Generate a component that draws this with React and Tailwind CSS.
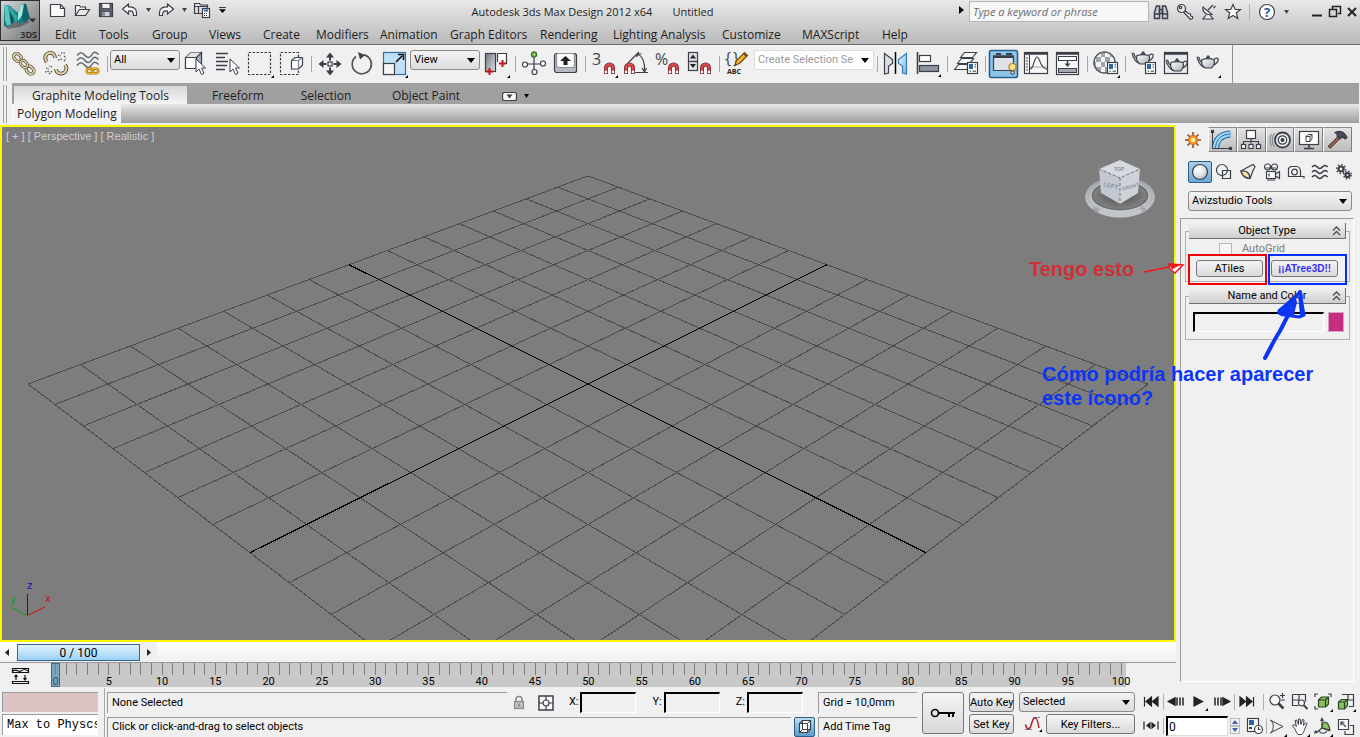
import React from "react";

const INK = "#3a3f4a";
const MENU_FONT = "font-['Open_Sans','Noto_Sans',sans-serif]";

/* ---------- shared drawing helpers ---------- */

function Svg({ w = 32, h = 32, children, className = "" }) {
  return (
    <svg
      width={w}
      height={h}
      viewBox={`0 0 ${w} ${h}`}
      fill="none"
      stroke={INK}
      strokeWidth="1.2"
      aria-hidden="true"
      className={`block shrink-0 ${className}`}
    >
      {children}
    </svg>
  );
}

const Flyout = ({ x = 27, y = 31 }) => (
  <path d={`M${x} ${y}h-3l3-3z`} fill="#000" stroke="none" />
);

const CursorArrow = ({ x, y }) => (
  <path
    transform={`translate(${x} ${y})`}
    d="M0 0v13l3-3 2.5 5.5 2.5-1.2L5.5 9H9.5z"
    fill="#fff"
    strokeWidth="1"
  />
);

const Magnet = ({ x, y }) => (
  <g transform={`translate(${x} ${y})`}>
    <path d="M2 12V6a3.500 3.500 0 0 1 7 0v6" stroke="#6b2a2e" strokeWidth="4" />
    <path d="M2 9V6a3.500 3.500 0 0 1 7 0v3" stroke="#e0474b" strokeWidth="2.400" />
    <path d="M2 11.200V8.800M9 11.200V8.800" stroke="#fff" strokeWidth="2.400" />
  </g>
);

const Panel = ({ x, y }) => (
  <g transform={`translate(${x} ${y})`}>
    <rect x=".5" y=".5" width="10" height="11" fill="#fff" />
    <rect x="2" y="2" width="4" height="5" fill="#2c65a5" stroke="none" />
    <path d="M7.5 2.8h1.5M7.5 5h1.5M2.5 9.2h1.5M5.5 9.2h3.5" strokeWidth="1" />
  </g>
);

const Teapot = ({ x = 0, y = 0 }) => (
  <g transform={`translate(${x} ${y})`}>
    <path
      d="M6 5.500c-1 3 .2 6.500 3 8.500h6.500c2.500-2 3.500-5.500 2.500-8.500-3-1.200-9-1.200-12 0z"
      fill="url(#potFill)"
    />
    <path d="M6 8.500 4.200 7 2.800 3.500.8 3.200" />
    <path d="M8.500 13.500C4.800 12.500 3 9 1.200 4.200" />
    <path d="M18.200 5.500c1-1.500 3.800-2 4-.2.200 2.200-2 4.500-5 6" />
    <path d="M10.500 4.200c0-1 .8-.8 1-2h1.200c.2 1.200 1 1 1 2" fill="#555b66" />
  </g>
);

const SharedFills = () => (
  <defs>
    <linearGradient id="potFill" x1="0" y1="0" x2="1" y2="1">
      <stop offset="0" stopColor="#fff" />
      <stop offset="1" stopColor="#a9adb3" />
    </linearGradient>
    <linearGradient id="slab" x1="0" y1="0" x2="1" y2="1">
      <stop offset="0" stopColor="#70757f" />
      <stop offset="1" stopColor="#e0e2e6" />
    </linearGradient>
    <linearGradient id="blueSlab" x1="0" y1="0" x2="1" y2="1">
      <stop offset="0" stopColor="#e6f4fc" />
      <stop offset="1" stopColor="#79b9e2" />
    </linearGradient>
    <radialGradient id="ball" cx=".38" cy=".32" r=".75">
      <stop offset="0" stopColor="#fff" />
      <stop offset=".6" stopColor="#dfe3e8" />
      <stop offset="1" stopColor="#9ba2ab" />
    </radialGradient>
  </defs>
);

const Chain = ({ cx, cy, s = 1, fill = "#e3d3aa", stroke = "#4d4633", r = 45 }) => (
  <g transform={`translate(${cx} ${cy}) rotate(${r}) scale(${s})`}>
    <rect x="-5.500" y="-3.800" width="11" height="7.600" rx="3.800" stroke={stroke} strokeWidth="4" />
    <rect x="-5.500" y="-3.800" width="11" height="7.600" rx="3.800" stroke={fill} strokeWidth="2" />
  </g>
);

const Waves = ({ ys, x = 5, color = "#4a4f58" }) =>
  ys.map((y) => (
    <path
      key={y}
      d={`M${x} ${y}c2-2 3.500-2 5.200 0s3.500 2 5.200 0 3.500-2 5.200 0`}
      stroke={color}
      strokeWidth="1.500"
    />
  ));

/* ---------- main toolbar icons ---------- */

const icons = {
  link: (
    <Svg>
      <Chain cx={9.5} cy={9.5} s={0.8} />
      <Chain cx={22} cy={22} s={0.8} />
      <Chain cx={16} cy={16} s={0.7} />
    </Svg>
  ),
  unlink: (
    <Svg>
      <path d="M7 14c-3-3-2-8 2-9s6 2 6 5" stroke="#4d4633" strokeWidth="3.800" />
      <path d="M7 14c-3-3-2-8 2-9s6 2 6 5" stroke="#e3d3aa" strokeWidth="2" />
      <path d="M25 17c3 3 1 8-3 8.500s-6-2-6-4.500" stroke="#4d4633" strokeWidth="3.800" />
      <path d="M25 17c3 3 1 8-3 8.500s-6-2-6-4.500" stroke="#e3d3aa" strokeWidth="2" />
      <path d="M18 7l3 1M18 12l4-1M21 5l4 0M24 8l2 2M24 13l2-2M6 20l3 1M5 24l4-1M9 26l3-3M12 19l-3-1" strokeDasharray="1.500 1" />
    </Svg>
  ),
  bind: (
    <Svg>
      <path d="M5 7.500c3.500-4 5.500-3 8 0s5 2.500 7-1 4-2.500 6.500 0M5 12.500c3.500-4 5.500-3 8 0s5 2.500 7-1 4-2.500 6.500 0M5 17.500c3.500-4 5.500-3 8 0s5 2.500 7-1 4-2.500 6.500 0" stroke="#60656e" strokeWidth="1.500" />
      <Chain cx={18} cy={23} s={0.6} fill="#f5c02a" stroke="#96660a" r={0} />
      <Chain cx={23} cy={23} s={0.6} fill="#f5c02a" stroke="#96660a" r={0} />
    </Svg>
  ),
  selectObject: (
    <Svg>
      <path d="M5.500 9.500l5-5h11v11l-5 5h-11z" fill="#e3e5e9" stroke="#7d828c" />
      <path d="M5.500 9.500h11v11h-11z" fill="#fff" />
      <path d="M16.500 9.500l5-5v11l-5 5z" fill="#aab0b9" />
      <CursorArrow x={16} y={11} />
    </Svg>
  ),
  selectByName: (
    <Svg>
      <path d="M4 5.500h12M4 9.500h9M4 13.500h12M4 17.500h11M4 21.500h9" strokeWidth="1.500" />
      <CursorArrow x={18} y={11} />
    </Svg>
  ),
  region: (
    <Svg>
      <rect x="4.500" y="4.500" width="22" height="22" strokeDasharray="2.500 1.500" />
      <Flyout x={30} y={30} />
    </Svg>
  ),
  crossing: (
    <Svg>
      <rect x="4.500" y="4.500" width="18" height="22" strokeDasharray="2.500 1.500" />
      <path d="M15.500 12.500l3.500-3h7.500v7.500l-4 4h-7z" fill="#fff" />
      <path d="M15.500 12.500h7v8M22.500 12.500l4-3" stroke="#7d828c" />
    </Svg>
  ),
  move: (
    <Svg>
      <path d="M16 4.500l4 5h-3v3h-2v-3h-3zM16 27.500l4-5h-3v-3h-2v3h-3zM4.500 16l5-4v3h3v2h-3v3zM27.500 16l-5-4v3h-3v2h3v3z" fill={INK} stroke="none" />
      <rect x="14" y="14" width="4" height="4" />
    </Svg>
  ),
  rotate: (
    <Svg>
      <path d="M10 8.500A9.600 9.600 0 1 0 18 6.800" strokeWidth="1.700" stroke="#50555e" />
      <path d="M12 4l7 3-5 4.500z" fill={INK} stroke="none" />
    </Svg>
  ),
  scale: (
    <Svg>
      <rect x="5.500" y="4.500" width="22" height="22" fill="#bfe0f6" stroke="#2f6fa8" />
      <rect x="5.500" y="15.500" width="11" height="11" fill="#f4f4f4" />
      <path d="M18 14l6-6M20 6.500h5.500V12" stroke="#111" strokeWidth="1.600" />
      <Flyout x={30} y={30} />
    </Svg>
  ),
  pivot: (
    <Svg>
      <rect x="5.500" y="5.500" width="10" height="18" fill="url(#slab)" />
      <path d="M17.500 14V5.500h9V16" fill="#fff" />
      <path d="M9.500 20v7M6 23.500h7M22.500 12v7M19 15.500h7" stroke="#c4161c" strokeWidth="2" />
      <Flyout x={30} y={30} />
    </Svg>
  ),
  manipulate: (
    <Svg>
      <path d="M16 8v16M6 16h20" />
      <circle cx="16" cy="6.500" r="2.600" fill="#7cc356" stroke="#39702a" />
      <circle cx="7" cy="16.500" r="2.500" fill="#fff" />
      <circle cx="25" cy="15.500" r="2.500" fill="#fff" />
      <circle cx="16.500" cy="24" r="2.500" fill="#fff" />
    </Svg>
  ),
  keyboard: (
    <Svg>
      <rect x="4.500" y="5.500" width="22" height="19" rx="2" fill="#b6bac1" />
      <rect x="6.500" y="5.500" width="18" height="14" rx="2" fill="#fbfbfb" stroke="#8d929b" />
      <path d="M15.500 8l5.500 5h-3.500v4h-4v-4H10z" fill="#222" stroke="none" />
    </Svg>
  ),
  angle: (
    <Svg>
      <path d="M8 15L19 4M12 24.500h16M18 6.500c5 2 7 9 6.500 16M16.500 9l1.500-3h3.500M22 20l2.500 4 2-4" />
      <Magnet x={4} y={14} />
    </Svg>
  ),
  spinner: (
    <Svg>
      <rect x="4.500" y="4.500" width="9" height="9" fill="#dfe1e5" />
      <rect x="4.500" y="13.500" width="9" height="9" fill="#dfe1e5" />
      <path d="M9 6.500l3 4H6zM9 20l3-4H6z" fill="#222" stroke="none" />
      <Magnet x={16} y={14} />
    </Svg>
  ),
  mirror: (
    <Svg>
      <path d="M4.500 5.500l8 6v4l-4 2.500v7l-4 1z" fill="#dcdfe3" />
      <path d="M15.500 4v22" stroke="#000" strokeWidth="1.500" />
      <path d="M26.500 5.500l-8 6v4l4 2.500v7l4 1z" fill="url(#blueSlab)" stroke="#2f7fb8" />
    </Svg>
  ),
  align: (
    <Svg>
      <path d="M5.500 4v22" strokeWidth="1.600" />
      <rect x="7.500" y="7.500" width="11" height="6" fill="#fff" />
      <rect x="7.500" y="17.500" width="19" height="6" fill="#8e949e" />
      <Flyout x={29} y={29} />
    </Svg>
  ),
  layers: (
    <Svg>
      <path d="M10.500 9.500l4-5h12l-4 5zM7.500 15.500l4-5h12l-4 5zM4.500 21.500l4-5h12l-4 5z" fill="#f8f8f8" />
      <Panel x={17} y={14} />
    </Svg>
  ),
  graphite: (
    <Svg>
      <rect x="1.500" y="2.500" width="28" height="27" rx="2" fill="#8cc4ea" stroke="#2a5f8c" strokeWidth="1.600" />
      <path d="M5.500 9.500v13h20v-13z" fill="#dfe3e8" />
      <path d="M5 8.500h21" strokeWidth="2.500" />
      <path d="M8 6h5M18 6h6" strokeWidth="2" />
      <circle cx="24.500" cy="19" r="3.500" fill="#ffe08a" stroke="#b98519" />
      <path d="M23 23h3v3h-3z" fill="#eee" strokeWidth="1" />
    </Svg>
  ),
  curve: (
    <Svg>
      <rect x="4.500" y="4.500" width="23" height="21" fill="#f8f8f8" />
      <path d="M4 5.500h24" strokeWidth="2.500" />
      <path d="M9.500 7v18M6 10h2M6 13h2M6 16h2M6 19h2M6 22h2" strokeWidth="1" />
      <path d="M10 19h17" stroke="#9aa0aa" strokeWidth="1" />
      <path d="M10 21c4 0 4-12 7-12s3 12 10 12" />
    </Svg>
  ),
  schematic: (
    <Svg>
      <rect x="4.500" y="4.500" width="22" height="22" fill="#f8f8f8" />
      <path d="M4 5.500h23" strokeWidth="2.500" />
      <rect x="6.500" y="8.500" width="18" height="4" fill="#fff" strokeWidth="1" />
      <rect x="6.500" y="20.500" width="18" height="4" fill="#a4a9b1" strokeWidth="1" />
      <path d="M15.500 13v4" strokeWidth="1.500" />
      <path d="M12.500 15.500h6l-3 3.500z" fill={INK} stroke="none" />
    </Svg>
  ),
  material: (
    <Svg>
      <circle cx="14.500" cy="14.500" r="10.500" fill="#f4f4f4" />
      <path d="M11 4.500h4V9h-4zM15 9h5v5h-5zM6 9h5v5H6zM20 5.500l3 3.500h-3zM11 14h4v5h-4zM20 14h4.500v5H20zM4.500 14H6v5H4.500zM6 19h5v4H6zM15 19h5v5h-5z" fill="#a1a6ae" stroke="none" />
      <circle cx="14.500" cy="14.500" r="10.500" stroke="#5b606a" />
      <Panel x={17} y={14} />
      <Flyout x={30} y={30} />
    </Svg>
  ),
  renderSetup: (
    <Svg>
      <Teapot x={3} y={2} />
      <Panel x={17} y={14} />
    </Svg>
  ),
  renderFrame: (
    <Svg>
      <rect x="4.500" y="4.500" width="23" height="21" fill="#e9ebee" />
      <path d="M4 5.500h24" strokeWidth="2.500" />
      <Teapot x={5} y={9} />
    </Svg>
  ),
  teapot: (
    <Svg>
      <Teapot x={4} y={6} />
      <Flyout x={29} y={30} />
    </Svg>
  ),
};

const SnapThree = () => (
  <Svg>
    <text x="4" y="17" fontSize="16" fontFamily="Open Sans, sans-serif" fill="#3f444e" stroke="none">3</text>
    <Magnet x={16} y={14} />
    <Flyout x={30} y={30} />
  </Svg>
);
const SnapPercent = () => (
  <Svg>
    <text x="3" y="17" fontSize="16" fontFamily="Open Sans, sans-serif" fill="#3f444e" stroke="none">%</text>
    <Magnet x={16} y={14} />
  </Svg>
);
const NamedSets = () => (
  <Svg>
    <text x="3" y="16" fontSize="16" fontFamily="Open Sans, sans-serif" fill="#3f444e" stroke="none">{"{"}</text>
    <text x="11" y="16" fontSize="16" fontFamily="Open Sans, sans-serif" fill="#3f444e" stroke="none">{"}"}</text>
    <path d="M13 17l1.500-4.500 8-8 3 3-8 8z" fill="#f3b62c" stroke="#6b4a10" />
    <path d="M21.500 5.500l3 3" stroke="#8c3a24" strokeWidth="1.500" />
    <text x="5" y="26" fontSize="7" fontWeight="bold" fontFamily="Open Sans, sans-serif" fill="#222" stroke="none">ABC</text>
  </Svg>
);

function Tool({ label, children, pressed }) {
  return (
    <button type="button" aria-label={label} aria-pressed={pressed} className="size-8 shrink-0">
      {children}
    </button>
  );
}

const Sep = () => (
  <span className="flex w-1.5 shrink-0 justify-center">
    <span className="h-4 w-px bg-[#a8a8a8]" />
  </span>
);

const Grip = () => (
  <span className="ml-[3px] mr-px flex w-1 shrink-0 justify-between self-stretch py-0.5">
    <span className="w-px bg-[#a0a0a0]" />
    <span className="w-px bg-[#a0a0a0]" />
  </span>
);

const DownArrow = ({ className = "" }) => (
  <svg width="8" height="5" viewBox="0 0 8 5" aria-hidden="true" className={`pointer-events-none shrink-0 ${className}`}>
    <path d="M0 0h8L4 5z" fill="#000" />
  </svg>
);

function Combo({ label, value, className = "", skin = "border-[#8a8a8a] bg-linear-to-b from-[#f4f4f4] to-[#dcdcdc] rounded-[3px]", text = "text-black" }) {
  return (
    <span className={`relative flex h-5 shrink-0 items-center border ${skin} ${className}`}>
      <select aria-label={label} className={`h-full w-full appearance-none bg-transparent pl-[3px] pr-4 outline-none ${text}`} defaultValue={value}>
        <option>{value}</option>
      </select>
      <DownArrow className="absolute right-1" />
    </span>
  );
}

function MainToolbar() {
  return (
    <div className="flex h-[38px] shrink-0 bg-[#f0f0f0]">
      <div className="flex items-center border-r border-[#8f8f8f] pr-2 text-[11px]">
        <Grip />
        <Tool label="Select and Link">{icons.link}</Tool>
        <Tool label="Unlink Selection">{icons.unlink}</Tool>
        <Tool label="Bind to Space Warp">{icons.bind}</Tool>
        <Sep />
        <Combo label="Selection Filter" value="All" className="mb-2 w-[70px]" />
        <Tool label="Select Object">{icons.selectObject}</Tool>
        <Tool label="Select by Name">{icons.selectByName}</Tool>
        <Tool label="Rectangular Selection Region">{icons.region}</Tool>
        <Tool label="Window Crossing">{icons.crossing}</Tool>
        <Sep />
        <Tool label="Select and Move">{icons.move}</Tool>
        <Tool label="Select and Rotate">{icons.rotate}</Tool>
        <Tool label="Select and Scale" pressed>{icons.scale}</Tool>
        <Combo label="Reference Coordinate System" value="View" className="mb-2 w-[70px]" />
        <Tool label="Use Pivot Point Center">{icons.pivot}</Tool>
        <Sep />
        <Tool label="Select and Manipulate">{icons.manipulate}</Tool>
        <Tool label="Keyboard Shortcut Override">{icons.keyboard}</Tool>
        <Sep />
        <Tool label="Snaps Toggle"><SnapThree /></Tool>
        <Tool label="Angle Snap">{icons.angle}</Tool>
        <Tool label="Percent Snap"><SnapPercent /></Tool>
        <Tool label="Spinner Snap">{icons.spinner}</Tool>
        <Sep />
        <Tool label="Edit Named Selection Sets"><NamedSets /></Tool>
        <Combo
          label="Named Selection Sets"
          value="Create Selection Se"
          className="mb-2 w-[120px]"
          skin="border-[#dcdcdc] bg-white"
          text="text-[#9a9a9a]"
        />
        <Sep />
        <Tool label="Mirror">{icons.mirror}</Tool>
        <Tool label="Align">{icons.align}</Tool>
        <Sep />
        <Tool label="Layer Manager">{icons.layers}</Tool>
        <Sep />
        <Tool label="Graphite Modeling Tools" pressed>{icons.graphite}</Tool>
        <Tool label="Curve Editor">{icons.curve}</Tool>
        <Tool label="Schematic View">{icons.schematic}</Tool>
        <Sep />
        <Tool label="Material Editor">{icons.material}</Tool>
        <Sep />
        <Tool label="Render Setup">{icons.renderSetup}</Tool>
        <Tool label="Rendered Frame Window">{icons.renderFrame}</Tool>
        <Tool label="Render Production">{icons.teapot}</Tool>
      </div>
    </div>
  );
}

/* ---------- title bar ---------- */

const Tiny = ({ color = "#444", s = 6 }) => (
  <svg width={s} height="4" viewBox="0 0 6 4" preserveAspectRatio="none" aria-hidden="true">
    <path d="M0 0h6L3 4z" fill={color} />
  </svg>
);

function IconButton({ label, className = "w-6", children }) {
  return (
    <button type="button" aria-label={label} className={`flex shrink-0 items-center justify-center ${className}`}>
      {children}
    </button>
  );
}

function AppLogo() {
  return (
    <button type="button" aria-label="Application menu" className="relative h-[41px] w-10 shrink-0 border border-[#2e2e30] bg-linear-to-br from-[#d4d6d7] to-[#6f7174]">
      <Svg w={38} h={39}>
        <g stroke="none">
          <path d="M4 25l9-4 14-2 2 2-10 5-12 2z" fill="#3c4246" opacity=".55" />
          <path d="M3 4l6 1 8 7 3-8 5-1 3 15-7 4-8-1-7 5-3-1z" fill="#147c80" />
          <path d="M3 4l4 1 3 18-4 2-2-6z" fill="#5fc4c0" />
          <path d="M6 4l4 1 7 12-2 5-4-5z" fill="#2fa5a4" />
          <path d="M17 12l3-8h4l-2 9-5 7z" fill="#a5e6e0" />
          <path d="M23 3l2-.5 4 15-6 4-2-7z" fill="#0e6468" />
          <path d="M9 11l4 7-1 4-2 1z" fill="#0c5155" />
          <path d="M28 17.500h7l-3.500 4z" fill="#2b2f33" />
        </g>
      </Svg>
      <span className="absolute bottom-0 right-0.5 font-['Open_Sans',sans-serif] text-[9px] font-semibold leading-[11px] text-[#222]">3DS</span>
    </button>
  );
}

const MENUS = ["Edit", "Tools", "Group", "Views", "Create", "Modifiers", "Animation", "Graph Editors", "Rendering", "Lighting Analysis", "Customize", "MAXScript", "Help"];

function Header() {
  return (
    <header className={`flex h-[45px] shrink-0 border-b border-[#6e6e6e] bg-linear-to-b from-[#e9e9e9] to-[#b9b9b9] text-[12px] text-[#1e1e1e] ${MENU_FONT}`}>
      <AppLogo />
      <div className="flex min-w-0 flex-1 flex-col">
        <div className="flex h-6 items-stretch">
          <div className="ml-1.5 flex shrink-0 pb-1">
            <IconButton label="New">
              <Svg w={18} h={16}><path d="M1.500 2.500h10l4 4v8h-14z" fill="#fbfbfb" /><path d="M11.500 2.500v4h4" /></Svg>
            </IconButton>
            <IconButton label="Open">
              <Svg w={18} h={16}><path d="M2.500 13.500v-10h4l1 1.500h5v3" fill="#f5f5f5" /><path d="M2.500 13.500l4-6h10l-4 6z" fill="#e9e9e9" /></Svg>
            </IconButton>
            <IconButton label="Save">
              <Svg w={16} h={16}><rect x="1.500" y="1.500" width="13" height="13" fill="#5d6470" /><rect x="4" y="1.500" width="8" height="5" fill="#f3f3f3" strokeWidth=".8" /><rect x="4" y="9.500" width="8" height="5" fill="#cdd0d5" strokeWidth=".8" /><path d="M6 10.500v3" /></Svg>
            </IconButton>
            <IconButton label="Undo">
              <Svg w={18} h={16}><path d="M1.500 7l6-5v3c6-.5 8.500 2 8 8.500h-3c.2-3.500-1-5-5-4.500v3z" fill="#f7f7f7" /></Svg>
            </IconButton>
            <IconButton label="Undo history" className="w-3"><Tiny s={5} /></IconButton>
            <IconButton label="Redo">
              <Svg w={18} h={16}><path d="M16.500 7l-6-5v3c-6-.5-8.500 2-8 8.500h3c-.2-3.500 1-5 5-4.500v3z" fill="#f7f7f7" /></Svg>
            </IconButton>
            <IconButton label="Redo history" className="w-3"><Tiny s={5} /></IconButton>
            <IconButton label="Project Folder">
              <Svg w={18} h={18}><path d="M9 12.500H1.500v-10h5l1 1.500h7v3M1.500 5.500h13M5.500 5.500v7" fill="none" /><rect x="9.500" y="7.500" width="7" height="9" fill="#fff" /><path d="M11 9.500h4" stroke="#2c65a5" strokeWidth="2" /><path d="M11 12.500h4M11 14.500h4" strokeWidth="1" strokeDasharray="1 1" /></Svg>
            </IconButton>
            <IconButton label="Customize Quick Access" className="w-4">
              <svg width="7" height="6" viewBox="0 0 8 7"><path d="M0 0h8v1H0zM0 2.500h8L4 7z" fill="#000" /></svg>
            </IconButton>
          </div>
          <h1 className="flex min-w-0 flex-1 items-center justify-center gap-5 whitespace-nowrap text-[11px]">
            <span>Autodesk 3ds Max Design 2012 x64</span>
            <span>Untitled</span>
          </h1>
          <div className="flex shrink-0">
            <IconButton label="Collapse search" className="mb-1 w-3">
              <svg width="5" height="8" viewBox="0 0 5 8"><path d="M0 0l5 4-5 4z" fill="#000" /></svg>
            </IconButton>
            <input
              aria-label="Search"
              placeholder="Type a keyword or phrase"
              className="mb-0.5 ml-0.5 mt-px w-[180px] border border-[#b4b4b4] bg-[#f7f7f8] px-[3px] pt-0.5 text-[11px] italic placeholder:text-[#6d6d6d]"
            />
            <IconButton label="Search" className="w-6">
              <Svg w={18} h={18}><path d="M2.500 15.500V9l2-6h3v12.500zM15.500 15.500V9l-2-6h-3v12.500z" fill="#c9ccd1" strokeWidth="1.500" /><path d="M7.500 6.500h3v4h-3zM2.500 11h5M10.500 11h5" strokeWidth="1.500" /></Svg>
            </IconButton>
            <IconButton label="Subscription" className="w-6">
              <Svg w={18} h={18}><circle cx="5.500" cy="5.500" r="4" fill="#e9ebee" /><circle cx="4.500" cy="4.500" r="1.200" /><path d="M8 9.500l6.500 7 2-1v-2l-2-.5v-2l-2-.3L9.500 8z" fill="#fff" /></Svg>
            </IconButton>
            <IconButton label="Communication Center" className="w-6">
              <Svg w={18} h={18}><path d="M3 4c-1 5 4 9 9 7.500z" fill="#e9ebee" /><path d="M8 7l5-5M13.500 5l2-2" /><path d="M6 12l-3 4h10l-3-4" fill="#e9ebee" /></Svg>
            </IconButton>
            <IconButton label="Favorites" className="w-6">
              <Svg w={18} h={18}><path d="M9 1.500l2.200 5h5.300l-4.200 3.500 1.500 5.500L9 12.500l-4.800 3 1.500-5.500L1.500 6.500h5.300z" fill="#fff" /></Svg>
            </IconButton>
            <span className="mx-1 my-1 w-px bg-[#b0b0b0]" />
            <IconButton label="Help" className="w-[26px]">
              <Svg w={18} h={18}>
                <circle cx="9" cy="9" r="7.500" fill="#fff" />
                <text x="9" y="13.500" textAnchor="middle" fontSize="13" fontWeight="bold" fontFamily="Open Sans, sans-serif" fill="#1f55a8" stroke="none">?</text>
              </Svg>
            </IconButton>
            <IconButton label="Help menu" className="mr-4 w-3"><Tiny s={5} /></IconButton>
            <IconButton label="Minimize" className="w-[18px]"><Svg w={12} h={12}><path d="M1 9.500h10" stroke="#222" strokeWidth="2" /></Svg></IconButton>
            <IconButton label="Restore" className="w-[18px]"><Svg w={14} h={14}><path d="M4.500 4V1.500h8v7H10" stroke="#222" strokeWidth="1.500" /><rect x="1.500" y="4.500" width="7" height="7" stroke="#222" strokeWidth="1.500" /></Svg></IconButton>
            <IconButton label="Close" className="w-4"><Svg w={10} h={10}><path d="M1 1l8 8M9 1L1 9" stroke="#222" strokeWidth="2" /></Svg></IconButton>
          </div>
        </div>
        <nav className="grid h-5 grid-cols-[44px_53px_57px_54px_53px_64px_70px_90px_73px_109px_80px_80px_40px] items-end pl-[15px]">
          {MENUS.map((m) => (
            <button key={m} type="button" className="whitespace-nowrap text-left">{m}</button>
          ))}
        </nav>
      </div>
    </header>
  );
}

/* ---------- ribbon ---------- */

function Ribbon() {
  return (
    <div className={`flex h-[42px] shrink-0 bg-[#f0f0f0] text-[12px] text-[#1e1e1e] ${MENU_FONT}`}>
      <Grip />
      <div className="ml-1 mr-px flex flex-1 flex-col">
        <div className="grid h-[21px] grid-cols-[176px_92px_92px_108px_auto] items-stretch justify-start bg-[#a0a0a0] pl-0.5">
          <button type="button" className="mr-[3px] mt-[3px] bg-linear-to-b from-[#d8d8d8] to-[#f6f6f6] leading-[18px]">Graphite Modeling Tools</button>
          <button type="button" className="pl-1 pt-1">Freeform</button>
          <button type="button" className="pr-1 pt-1">Selection</button>
          <button type="button" className="pr-1 pt-1">Object Paint</button>
          <button type="button" aria-label="Ribbon display" className="ml-5 flex items-center gap-1.5 pt-1">
            <Svg w={16} h={9}><rect x=".5" y=".5" width="14" height="8" rx="2" fill="#f4f4f4" /><path d="M4.500 2.500h6l-3 4z" fill={INK} stroke="none" /></Svg>
            <Tiny color="#000" s={5} />
          </button>
        </div>
        <div className="flex h-[19px] bg-linear-to-b from-[#e8e8e8] to-[#9d9d9d]">
          <button type="button" className="border-l border-white bg-[#f3f3f3] px-1 text-[12px] leading-[18px]">Polygon Modeling</button>
        </div>
      </div>
    </div>
  );
}

/* ---------- viewport ---------- */

const CELLS = 14;

function project(u, v) {
  const a = u - v;
  const b = u + v;
  const w = 1 - 0.1716 * b;
  return [588 + (280 * a) / w, -430.4 + 814.4 / w];
}

function gridLines() {
  const lines = [];
  for (let i = 0; i <= CELLS; i++) {
    const t = (2 * i) / CELLS - 1;
    const axis = i * 2 === CELLS;
    lines.push({ from: project(t, -1), to: project(t, 1), axis });
    lines.push({ from: project(-1, t), to: project(1, t), axis });
  }
  return lines.sort((p, q) => Number(p.axis) - Number(q.axis));
}

function ViewCube() {
  return (
    <svg width="72" height="60" viewBox="0 0 72 60" aria-hidden="true" className="absolute right-[18px] top-8">
      <defs>
        <linearGradient id="ring" x1="0" y1="0" x2="0" y2="1">
          <stop offset="0" stopColor="#9fa2a6" />
          <stop offset="1" stopColor="#c6c9ce" />
        </linearGradient>
        <radialGradient id="shade">
          <stop offset="0" stopColor="#4c4e51" />
          <stop offset="1" stopColor="#808080" />
        </radialGradient>
      </defs>
      <ellipse cx="36" cy="38" rx="35" ry="20.500" fill="url(#ring)" />
      <ellipse cx="36" cy="36.500" rx="29" ry="15.500" fill="#6e6e6e" stroke="#d2d5d9" strokeWidth="1" />
      <ellipse cx="36" cy="36.500" rx="26.500" ry="13.500" fill="url(#shade)" />
      <path d="M15 10L36 1l20 9-20 9z" fill="#d6dadf" />
      <path d="M15 10l21 9v26L17 34z" fill="#c3c8d0" />
      <path d="M56 10l-20 9v26l18-11z" fill="#cdd1d8" />
      <path d="M15 10l21 9 20-9M36 19v26" stroke="#6e737c" strokeDasharray="3 2" fill="none" />
      <g fontFamily="Liberation Sans, sans-serif" fontWeight="bold" fontSize="7" fill="#8d929b">
        <text x="19" y="27" transform="rotate(14 19 27)" fontSize="6">LEFT</text>
        <text x="39" y="32" transform="rotate(-18 39 32)" fontSize="5">FRONT</text>
        <text x="30" y="12" fontSize="5">TOP</text>
        <text x="8" y="52" transform="rotate(20 8 52)">W</text>
        <text x="58" y="53" transform="rotate(-30 58 53)">S</text>
      </g>
    </svg>
  );
}

function AxisTripod() {
  return (
    <svg width="48" height="40" viewBox="0 0 48 40" aria-hidden="true" className="absolute bottom-5 left-1.5" fontFamily="DejaVu Sans, sans-serif" fontSize="10">
      <path d="M19.500 35V14" stroke="#1010c0" />
      <path d="M19.500 35.500L2.500 27" stroke="#10a010" />
      <path d="M19.500 35.500L37 27" stroke="#d01010" />
      <text x="19" y="9" fill="#1010c0">z</text>
      <text x="2" y="23" fill="#10a010">y</text>
      <text x="37" y="22" fill="#d01010">x</text>
    </svg>
  );
}

function Viewport() {
  return (
    <section className="relative flex min-h-0 flex-1 overflow-hidden border-2 border-[#fcf800] bg-[#7d7d7d]">
      <svg viewBox="2 127 1172 513" preserveAspectRatio="xMidYMid slice" className="h-full min-w-0 flex-1" shapeRendering="crispEdges" aria-label="Perspective grid">
        {gridLines().map((l, i) => (
          <line key={i} x1={l.from[0]} y1={l.from[1]} x2={l.to[0]} y2={l.to[1]} stroke={l.axis ? "#000" : "#4b4b4b"} strokeWidth="1" />
        ))}
      </svg>
      <p className="absolute left-1 top-[3px] font-['Liberation_Sans',sans-serif] text-[11px] leading-[13px] text-[#cfcfcf]">[ + ] [ Perspective ] [ Realistic ]</p>
      <ViewCube />
      <AxisTripod />
    </section>
  );
}

/* ---------- time slider and track bar ---------- */

function TimeSlider() {
  return (
    <div className="flex h-5 shrink-0 items-center bg-linear-to-b from-white to-[#efeff3] text-[12px]">
      <button type="button" aria-label="Previous frame" className="flex h-full w-[17px] items-center pl-[5px]">
        <svg width="4" height="7" viewBox="0 0 4 7"><path d="M4 0v7L0 3.500z" fill="#222" /></svg>
      </button>
      <button type="button" className="h-[17px] w-[123px] border border-[#35678c] bg-linear-to-b from-[#dff2fc] via-[#bfe3f9] to-[#98d1f2] leading-[16px]">0 / 100</button>
      <button type="button" aria-label="Next frame" className="flex h-full w-[17px] items-center bg-[#f0f0f0] pl-[7px]">
        <svg width="4" height="7" viewBox="0 0 4 7"><path d="M0 0v7l4-3.500z" fill="#222" /></svg>
      </button>
    </div>
  );
}

function TrackBar() {
  return (
    <div className="flex h-[26px] shrink-0 border-t border-[#9a9a9a] bg-[#f0f0f0]">
      <button type="button" aria-label="Open Mini Curve Editor" className="flex w-[51px] shrink-0 justify-center pr-[9px] pt-1">
        <Svg w={20} h={18}><g stroke="#111" strokeWidth="1.200"><path d="M1.500 1.500h16v4h-16zM1.500 14.500h16v2h-16z" /><path d="M2 4c4-3 5 2 8 0s4-2 7 0M5 13V8M3.500 10L5 8l1.500 2M14 8v5M12.500 11l1.500 2 1.500-2" /></g></Svg>
      </button>
      <div className="relative mb-px mr-[50px] flex flex-1 justify-between bg-[#c8c8c8] pl-1 pr-1">
        {Array.from({ length: 101 }, (_, f) => (
          <span key={f} className="flex w-px flex-col items-center">
            <span className="h-3 w-px shrink-0 bg-[#7e7e7e]" />
            {f % 5 === 0 && <span className="text-[11px] leading-[13px]">{f}</span>}
          </span>
        ))}
        <span className="absolute inset-y-0 left-0 w-[9px] border border-[#3f6a85] bg-[#4a8db8]/60" />
      </div>
    </div>
  );
}

/* ---------- command panel ---------- */

const panelTabs = [
  ["Modify", <Svg w={24} h={22}><path d="M5.500 19.500C6 10 11 5.500 20.500 5" stroke="#1f6ea6" strokeWidth="7" /><path d="M5.500 19.500C6 10 11 5.500 20.500 5" stroke="#a5d6f2" strokeWidth="5" /><path d="M5.500 19.500C6 10 11 5.500 20.500 5" stroke="#1f6ea6" strokeWidth="1" /><path d="M2.500 3v16.500h18" strokeWidth="1" /><rect x="1.500" y="1.500" width="2" height="2" fill={INK} /><rect x="19.500" y="18.500" width="2" height="2" fill={INK} /></Svg>],
  ["Hierarchy", <Svg w={24} h={22}><rect x="7.500" y="1.500" width="9" height="8" fill="#fff" /><path d="M12 9.500v5M4.500 15v-2.500h15V15" /><rect x="2.500" y="15.500" width="4" height="4" fill="#fff" /><rect x="10" y="15.500" width="4" height="4" fill="#fff" /><rect x="17.500" y="15.500" width="4" height="4" fill="#fff" /></Svg>],
  ["Motion", <Svg w={24} h={22}><circle cx="14.500" cy="11" r="7.500" fill="#e8eaed" strokeWidth="1.800" /><circle cx="14.500" cy="11" r="4.200" fill="#fff" /><circle cx="14.500" cy="11" r="1.500" fill={INK} /><path d="M6.500 4c-3 4-3 10 0 14M3.500 5c-2 4-2 8 0 12" stroke="#8a8f98" /></Svg>],
  ["Display", <Svg w={24} h={22}><rect x="2.500" y="2.500" width="19" height="13" fill="#fff" /><path d="M7 19.500h10M12 16v3" strokeWidth="1.600" /><path d="M9 7.500l2-2h4v4l-2 3H9zM9 7.500h4v5M13 7.500l2-2" strokeWidth="1" /></Svg>],
  ["Utilities", <Svg w={24} h={22}><path d="M3 18.500L13.500 8" stroke="#3f2422" strokeWidth="3.600" /><path d="M3.500 18L13.500 8" stroke="#a8665c" strokeWidth="1.800" /><path d="M9 3.500c5-2.500 9-1 12 5l-2 1.500-2.500-2-2.500 2-3-3c1-1 0-2-2-3.500z" fill="#454b57" /></Svg>],
];

const categories = [
  ["Geometry", <Svg w={20} h={20}><circle cx="10" cy="10" r="7.500" fill="url(#ball)" /></Svg>],
  ["Shapes", <Svg w={18} h={18}><circle cx="7" cy="7" r="5.500" fill="#f4f4f4" /><path d="M7.500 7.500h8v8h-8z" /></Svg>],
  ["Lights", <Svg w={18} h={18}><path d="M2 8c1 4 4 7 9 7.500l3-8 2-4-2-2-4 2z" fill="#eee" /><path d="M2 8c1 4 4 7 9 7.500C11 10 7 7 2 8z" fill="#f5e2a0" /></Svg>],
  ["Cameras", <Svg w={20} h={20}><circle cx="5.500" cy="5" r="3" fill="#fff" /><circle cx="12.500" cy="5" r="3" fill="#fff" /><rect x="4.500" y="9.500" width="9" height="7" fill="#fff" /><path d="M13.500 12l4-2.500v7l-4-2.500M7 11.500v3M4 6h10M5 18h8" /></Svg>],
  ["Helpers", <Svg w={18} h={18}><path d="M1.500 13.500v-8l2-2h6c3 0 4 3 4 6v4z" fill="#f4f4f4" /><path d="M13 13.500h4v2" /><circle cx="7.500" cy="9" r="2.800" /></Svg>],
  ["Space Warps", <Svg w={18} h={18}><Waves x={1} ys={[4, 9, 14]} color="#2f343d" /></Svg>],
  ["Systems", <Svg w={18} h={18}><circle cx="6" cy="6" r="2.500" strokeWidth="2.200" stroke="#3b3f47" /><circle cx="6" cy="6" r="4.400" strokeWidth="1.600" strokeDasharray="1.400 2" /><circle cx="12.500" cy="12" r="2" strokeWidth="2.200" stroke="#3b3f47" /><circle cx="12.500" cy="12" r="3.800" strokeWidth="1.600" strokeDasharray="1.400 1.600" /></Svg>],
];

function Rollout({ title, children }) {
  return (
    <section className="flex flex-col">
      <button
        type="button"
        className="relative z-10 mx-1 flex h-4 items-center justify-center border-b border-r border-b-[#6f6f6f] border-r-[#6f6f6f] bg-linear-to-b from-[#f0f0f0] to-[#cfcfcf] leading-[14px]"
      >
        {title}
        <svg width="9" height="10" viewBox="0 0 9 10" className="absolute right-1" fill="none" stroke="#555" strokeWidth="1.500" aria-hidden="true">
          <path d="M1 4.500L4.500 1 8 4.500M1 9l3.500-3.500L8 9" />
        </svg>
      </button>
      <div className="-mt-2 border border-[#b0b0b0] pt-2">{children}</div>
    </section>
  );
}

const pushButton = "rounded-[3px] border border-[#777] bg-linear-to-b from-[#f5f5f5] to-[#d9d9d9]";

function CommandPanel() {
  return (
    <aside className="relative flex w-[184px] shrink-0 flex-col bg-[#f0f0f0] text-[11px]">
      <div className="mt-0.5 flex h-[25px] items-stretch pl-px pr-2">
        <button type="button" aria-label="Create" aria-pressed="true" className="flex w-[31px] items-center justify-center">
          <Svg w={20} h={20}>
            <path d="M10 2v16M2 10h16M4.500 4.500l11 11M15.500 4.500l-11 11" stroke="#8f4a20" strokeWidth="1.600" />
            <circle cx="10" cy="10" r="4.500" fill="#f79a2e" stroke="#d2691e" />
            <circle cx="10" cy="10" r="2.200" fill="#ffe9a0" stroke="none" />
          </Svg>
        </button>
        {panelTabs.map(([label, icon]) => (
          <button key={label} type="button" aria-label={label} className="flex flex-1 items-center justify-center border border-b-[#8b8b8b] border-l-white border-r-[#7c7c7c] border-t-[#8b8b8b] bg-linear-to-b from-[#e4e4e4] to-[#bcbcbc]">
            {icon}
          </button>
        ))}
      </div>
      <div className="mt-2 flex h-6 items-center pl-3 pr-1">
        {categories.map(([label, icon], i) => (
          <button
            key={label}
            type="button"
            aria-label={label}
            className={
              i === 0
                ? "flex h-[22px] w-6 items-center justify-center rounded-[2px] border border-[#2a5f8c] bg-linear-to-b from-[#a9cfe9] to-[#6fa9d4]"
                : "flex h-[22px] w-6 items-center justify-center"
            }
          >
            {icon}
          </button>
        ))}
      </div>
      <Combo label="Object category" value="Avizstudio Tools" className="ml-3 mr-2 mt-[7px]" />
      <div className="mb-1.5 ml-1 mr-1.5 mt-[7px] flex flex-1 flex-col gap-1.5 border border-b-white border-l-[#9a9a9a] border-r-white border-t-[#9a9a9a] pl-1 pr-[3px] pt-1">
        <Rollout title="Object Type">
          <label className="ml-[33px] flex h-[18px] items-center gap-2.5 text-[#7b7b7b]">
            <input type="checkbox" disabled className="size-[13px] appearance-none border border-[#b9b9b9] bg-[#f6f6f6]" />
            AutoGrid
          </label>
          <div className="-mb-1 -mt-1 grid h-[31px] grid-cols-2 gap-px px-0.5">
            <div className="relative border-2 border-[#f00000] pl-1.5 pr-0.5 pt-1">
              <button type="button" className={`block h-[17px] w-full leading-[14px] ${pushButton}`}>ATiles</button>
            </div>
            <div className="relative border-2 border-[#0030ff] pl-px pr-[7px] pt-1">
              <button type="button" className={`block h-[17px] w-full font-['Liberation_Sans',sans-serif] text-[10px] font-bold leading-[14px] text-[#3a32f0] ${pushButton}`}>¡¡ATree3D!!</button>
            </div>
          </div>
        </Rollout>
        <Rollout title="Name and Color">
          <div className="flex items-center gap-1 py-[7px] pl-[7px] pr-[5px]">
            <input aria-label="Object name" className="h-5 min-w-0 flex-1 border border-b-white border-l-2 border-r-white border-l-black border-t-2 border-t-black bg-[#f0f0f0] px-1" />
            <button type="button" aria-label="Object color" className="h-5 w-4 border border-[#d8a0c0] bg-[#c52d80]" />
          </div>
        </Rollout>
      </div>
      <Annotations />
    </aside>
  );
}

function Annotations() {
  return (
    <div className="pointer-events-none font-['Liberation_Sans',sans-serif] text-[20px] font-bold leading-6">
      <p className="absolute left-[-147px] top-[132px] z-20 whitespace-nowrap text-[#cf2f35]">Tengo esto</p>
      <p className="absolute left-[-134px] top-[237px] z-20 whitespace-nowrap text-[#0c35f5]">
        Cómo podría hacer aparecer
        <br />
        este ícono?
      </p>
      <svg width="46" height="20" viewBox="0 0 46 20" fill="none" className="absolute left-[-34px] top-[134px] z-20" aria-hidden="true">
        <path d="M2 13l30-6" stroke="#f01818" strokeWidth="1.500" />
        <path d="M27 5l14 1-8 8-5-4z" fill="#fff" stroke="#f01818" strokeWidth="1.500" />
        <path d="M27 4.500l12 1-9 5z" fill="#f01818" />
      </svg>
      <svg width="50" height="74" viewBox="0 0 50 74" fill="none" className="absolute left-[82px] top-[163px] z-20" aria-hidden="true" stroke="#0c35f5" strokeLinecap="round" strokeLinejoin="round">
        <path d="M7 70c5-9 9-18 15-27 4-8 7-14 11-21" strokeWidth="4" />
        <path d="M42 4L21 23c-1 2 2 4 6 4l14 2 5-2z" strokeWidth="3" />
        <path d="M42 4c1 8 1 16 2 22M37 14l-3 12" strokeWidth="4" />
        <path d="M39 8L20 22l8 5 6-9z" fill="#0c35f5" />
      </svg>
    </div>
  );
}

/* ---------- status bar ---------- */

const sunken = "border-l border-t border-l-[#9a9a9a] border-t-[#9a9a9a]";

function Coord({ axis }) {
  return (
    <label className="flex items-center gap-0.5">
      {axis}:
      <input className="h-[21px] w-14 border border-b-white border-l-2 border-r-white border-l-black border-t-2 border-t-black bg-[#f0f0f0] px-1" />
    </label>
  );
}

const VSep = () => <span className="h-4 w-px shrink-0 bg-[#b0b0b0]" />;

const nav = [
  ["Zoom", <><circle cx="8" cy="8" r="5" fill="#f6f6f6" /><path d="M11.500 11.500l5 5" strokeWidth="2.600" /><path d="M15.500 1v5M13 3.500h5M14 8h4" /></>],
  ["Zoom All", <><path d="M2.500 2.500h13v7M2.500 2.500v11h6M9 2.500v7M2.500 8h7" /><circle cx="11.500" cy="11" r="3" fill="#fff" /><path d="M14 13.500l3.500 3.500" strokeWidth="2" /></>],
  ["Zoom Extents", <><path d="M2 5V2h3M15 2h3v3M2 14v3h3" /><path d="M5.500 8l3-3h7v7l-3 3h-7z" fill="#8cc068" stroke="#2c4420" /><path d="M5.500 8h7v7M12.500 8l3-3" stroke="#2c4420" /><Flyout x={20} y={20} /></>],
  ["Zoom Extents All", <><path d="M6 2.500h11.500v12H13M12 2.500v5M11 8h6.500" /><path d="M2.500 10l3-2.500h6v6l-3 3.500h-6z" fill="#8cc068" stroke="#2c4420" /><path d="M2.500 10h6v7M8.500 10l3-2.500" stroke="#2c4420" /><Flyout x={20} y={20} /></>],
  ["Field of View", <><path d="M3 3l13 6.500L3 16M4 3.500c3 3 3 9 0 12" strokeWidth="1" /><Flyout x={20} y={20} /></>],
  ["Pan", <><path d="M5 12L2.500 8.500l1.500-1 2.500 2L5 3.500l1.500-.5 2 4.500V2H10l1 5.500 1.500-5L14 3l-.5 5.500L16 5.500l1 1-2.500 6c-1 3-2 4.500-3 5H8c-1-1-2-3-3-5.500z" fill="#fff" strokeWidth="1" /><Flyout x={20} y={20} /></>],
  ["Orbit", <><path d="M9 2v9l-6 5M9 11l8 3" /><path d="M9 11c0-4 1-6 3-6s4 3 5 8z" fill="#8cc068" stroke="#2c4420" /><path d="M6 14c2 3 6 3 8 0" /><path d="M9 0l2 4H7zM1 17l1-4 3 2z" fill={INK} stroke="none" /><Flyout x={20} y={20} /></>],
  ["Maximize Viewport", <><path d="M2.500 2.500h10v10h-10z" fill="#fff" /><path d="M14 8.500h3.500v9H9V14" /><path d="M5 5l5 5M5 8.500V5h3.500" /></>],
];

const playRow = [
  ["Go to Start", <path d="M2.500 4v9.500M9.500 4L4 8.500l5.500 4.500zM16 4l-5.500 4.500L16 13z" fill="#222" stroke="#222" />],
  ["Previous", <path d="M1.500 8.500L8 5v7zM10 4.500v8M13 4.500v8M16 4.500v8" fill="#222" stroke="#222" strokeWidth="1.500" />],
  ["Play", <><path d="M4 4v9l8.500-4.500z" fill="#222" stroke="#222" /><Flyout x={18} y={18} /></>],
  ["Next", <path d="M16.500 8.500L10 5v7zM2 4.500v8M5 4.500v8M8 4.500v8" fill="#222" stroke="#222" strokeWidth="1.500" />],
  ["Go to End", <path d="M15.500 4v9.500M8.500 4L14 8.500 8.500 13zM2 4l5.500 4.500L2 13z" fill="#222" stroke="#222" />],
];

function StatusBar() {
  return (
    <footer className="flex h-[49px] shrink-0 bg-[#f0f0f0] text-[11px] text-black">
      <div className="flex w-[105px] shrink-0 flex-col gap-0.5 border-r border-[#a8a8a8] pl-0.5 pr-1.5 pt-1">
        <div className={`h-5 bg-[#dcc3c4] ${sunken}`} />
        <input
          aria-label="MAXScript listener"
          defaultValue="Max to Physcs"
          className={`h-[21px] w-full bg-white pl-1 pr-px font-['Liberation_Mono',monospace] text-[12px] ${sunken}`}
        />
      </div>
      <div className="ml-0.5 flex min-w-0 flex-1 flex-col gap-1 pt-1">
        <div className="flex h-[21px] items-center">
          <p className={`flex h-full min-w-0 flex-1 items-center pl-1 ${sunken}`}>None Selected</p>
          <IconButton label="Selection Lock" className="w-6">
            <Svg w={12} h={15}><path d="M3 7V4.500a3 3 0 0 1 6 0V7" stroke="#8a8a8a" strokeWidth="1.600" /><rect x="1.500" y="6.500" width="9" height="7" fill="#bdbdbd" stroke="#8a8a8a" /><path d="M6 8.500v3" stroke="#777" /></Svg>
          </IconButton>
          <IconButton label="Absolute Mode" className="mr-2 w-[30px]">
            <Svg w={16} h={16}><rect x="1" y="1" width="14" height="14" fill="#fafafa" strokeWidth="1.500" /><circle cx="8" cy="8" r="3" /><path d="M8 1v4M8 11v4M1 8h4M11 8h4" /></Svg>
          </IconButton>
          <div className="flex gap-4 pr-[15px]">
            <Coord axis="X" />
            <Coord axis="Y" />
            <Coord axis="Z" />
          </div>
        </div>
        <div className="flex h-5 items-center">
          <p className={`flex h-full min-w-0 flex-1 items-center pl-1 ${sunken}`}>Click or click-and-drag to select objects</p>
          <button type="button" aria-label="Isolate Selection" className="ml-[3px] mr-[3px] flex h-5 w-[21px] items-center justify-center rounded-[2px] border border-[#2a5f8c] bg-linear-to-b from-[#bcdcf0] to-[#5a9ccc]">
            <Svg w={16} h={16}><path d="M2.500 4.500l3-3h8v9l-3 3h-8z" fill="#fff" /><path d="M2.500 4.500h8v9M10.500 4.500l3-3M5.500 1.500v9h8M5.500 10.500l-3 3" strokeWidth="1" /></Svg>
          </button>
        </div>
      </div>
      <div className="flex w-[99px] shrink-0 flex-col gap-1 pt-1">
        <p className={`flex h-[21px] items-center pl-1 ${sunken}`}>Grid = 10,0mm</p>
        <button type="button" className={`flex h-5 items-center pl-1 ${sunken}`}>Add Time Tag</button>
      </div>
      <div className="flex gap-[5px] pl-[5px] pt-1">
        <button type="button" aria-label="Set Keys" className={`flex h-[42px] w-[42px] items-center justify-center ${pushButton}`}>
          <Svg w={26} h={14}><g stroke="#000"><circle cx="5" cy="7" r="3.500" strokeWidth="1.600" /><path d="M8.500 7H25M19 7v4M23 7v4" strokeWidth="2" /></g></Svg>
        </button>
        <div className="flex w-[45px] flex-col justify-between pb-[3px]">
          <button type="button" className={`h-5 whitespace-nowrap leading-[17px] ${pushButton}`}>Auto Key</button>
          <button type="button" className={`h-5 whitespace-nowrap leading-[17px] ${pushButton}`}>Set Key</button>
        </div>
        <div className="flex w-[116px] flex-col justify-between pb-[3px]">
          <Combo label="Key target" value="Selected" />
          <div className="flex items-center">
            <IconButton label="Default Tangents" className="w-[27px]">
              <Svg w={20} h={18}><path d="M2 14.500h7M10 2.500h7" stroke="#6a7fc0" /><path d="M2.500 9.500c1 5 4 6 5.500 1s2-7.500 4-7.500 3 3 4 10" stroke="#b0242a" strokeWidth="1.500" /><Flyout x={19} y={17} /></Svg>
            </IconButton>
            <button type="button" className={`h-5 flex-1 leading-[17px] ${pushButton}`}>Key Filters...</button>
          </div>
        </div>
      </div>
      <div className="flex shrink-0 flex-col gap-1 pl-1 pt-1">
        <div className="flex h-5 items-center">
          {playRow.map(([label, art], i) => (
            <React.Fragment key={label}>
              <IconButton label={label} className={i === 2 ? "w-[22px]" : "w-6"}><Svg w={18} h={18}>{art}</Svg></IconButton>
              {(i === 0 || i === 3) && <VSep />}
            </React.Fragment>
          ))}
          <span className="w-1" />
          <VSep />
        </div>
        <div className="flex h-5 items-center">
          <IconButton label="Key Mode" className="w-6"><Svg w={18} h={18}><path d="M2 4.500v8M16 4.500v8M8 6v5L5 8.500zM10 6v5l3-2.500z" fill="#222" stroke="#222" /></Svg></IconButton>
          <VSep />
          <input aria-label="Current frame" defaultValue="0" className="ml-0.5 h-5 w-[62px] border border-l-2 border-t-2 border-b-[#ddd] border-l-black border-r-[#ddd] border-t-black bg-white px-px text-[12px]" />
          <span className="ml-0.5 flex w-2.5 flex-col">
            <button type="button" aria-label="Increase" className="flex h-2 items-center justify-center border border-[#bbb]"><svg width="6" height="4" viewBox="0 0 6 4"><path d="M0 4h6L3 0z" fill="#4a5aa8" /></svg></button>
            <button type="button" aria-label="Decrease" className="flex h-2 items-center justify-center border border-[#bbb]"><svg width="6" height="4" viewBox="0 0 6 4"><path d="M0 0h6L3 4z" fill="#4a5aa8" /></svg></button>
          </span>
          <IconButton label="Time Configuration" className="ml-1 w-[22px]">
            <Svg w={18} h={18}><rect x="1.500" y="1.500" width="11" height="13" fill="#fff" /><rect x="3" y="3" width="5" height="5" fill="#2c65a5" stroke="none" /><path d="M3 11h3" strokeWidth="2" /><circle cx="12.500" cy="12.500" r="4" fill="#fff" /><path d="M12.500 10v2.500h2" /></Svg>
          </IconButton>
          <VSep />
        </div>
      </div>
      <div className="ml-auto mr-1 grid shrink-0 grid-cols-4 gap-x-[3px] gap-y-1 pt-1">
        {nav.map(([label, art]) => (
          <IconButton key={label} label={label} className="h-5 w-5"><Svg w={20} h={20}>{art}</Svg></IconButton>
        ))}
      </div>
    </footer>
  );
}

export default function App() {
  return (
    <div className="flex h-screen min-h-[480px] w-full flex-col overflow-hidden bg-[#f0f0f0] font-['Roboto','Noto_Sans',sans-serif] text-[11px] text-black">
      <svg width="0" height="0" className="absolute" aria-hidden="true"><SharedFills /></svg>
      <Header />
      <MainToolbar />
      <Ribbon />
      <main className="flex min-h-0 flex-1">
        <div className="flex min-w-0 flex-1 flex-col">
          <Viewport />
          <TimeSlider />
          <TrackBar />
        </div>
        <CommandPanel />
      </main>
      <StatusBar />
    </div>
  );
}
